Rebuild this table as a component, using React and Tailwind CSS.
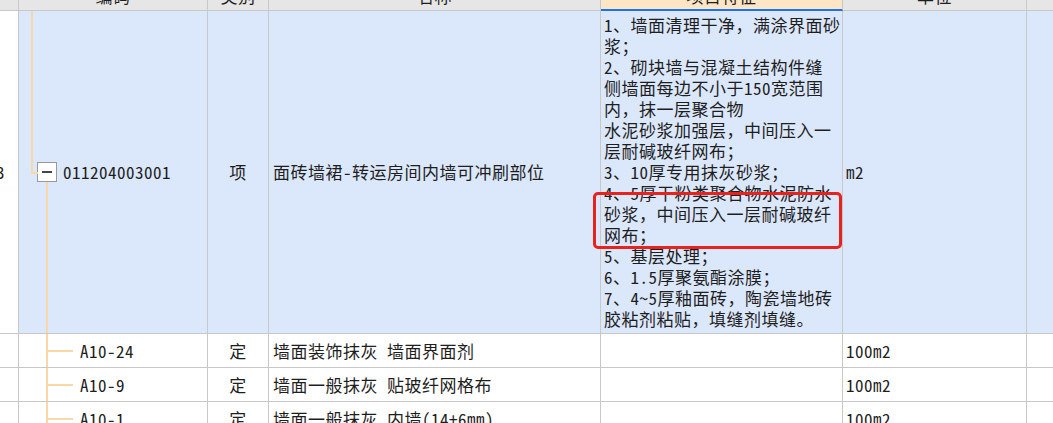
const features = [
  "1、墙面清理干净，满涂界面砂",
  "浆；",
  "2、砌块墙与混凝土结构件缝",
  "侧墙面每边不小于150宽范围",
  "内，抹一层聚合物",
  "水泥砂浆加强层，中间压入一",
  "层耐碱玻纤网布；",
  "3、10厚专用抹灰砂浆；",
  "4、5厚干粉类聚合物水泥防水",
  "砂浆，中间压入一层耐碱玻纤",
  "网布；",
  "5、基层处理；",
  "6、1.5厚聚氨酯涂膜；",
  "7、4~5厚釉面砖，陶瓷墙地砖",
  "胶粘剂粘贴，填缝剂填缝。",
];

const children = [
  { code: "A10-24", type: "定", name: "墙面装饰抹灰 墙面界面剂", unit: "100m2" },
  { code: "A10-9", type: "定", name: "墙面一般抹灰 贴玻纤网格布", unit: "100m2" },
  { code: "A10-1", type: "定", name: "墙面一般抹灰 内墙(14+6mm)", unit: "100m2" },
];

function HeadLabel({ children }) {
  return <span className="mt-[-15px] leading-[21px] whitespace-nowrap">{children}</span>;
}

export default function App() {
  return (
    <div
      className="w-[1053px] h-[423px] overflow-hidden bg-white text-[17px] tracking-[0.5px] text-[#1e1e1e]"
      style={{ fontFamily: '"Noto Sans Mono CJK SC", "Noto Sans CJK SC", sans-serif' }}
    >
      {/* header */}
      <div className="flex h-[11px] overflow-hidden bg-[#e6e6e6]">
        <div className="w-[19px] shrink-0 border-r border-b border-[#c8c8c8]" />
        <div className="w-[189px] shrink-0 flex justify-center border-r border-b border-[#c8c8c8]">
          <HeadLabel>编码</HeadLabel>
        </div>
        <div className="w-[61px] shrink-0 flex justify-center border-r border-b border-[#c8c8c8]">
          <HeadLabel>类别</HeadLabel>
        </div>
        <div className="w-[332px] shrink-0 flex justify-center border-r border-b border-[#c8c8c8]">
          <HeadLabel>名称</HeadLabel>
        </div>
        <div className="w-[242px] shrink-0 flex justify-center bg-[#fde5c6] border-r border-[#c8c8c8] border-b-2 border-b-[#1f72e4]">
          <HeadLabel>项目特征</HeadLabel>
        </div>
        <div className="w-[184px] shrink-0 flex justify-center border-r border-b border-[#c8c8c8]">
          <HeadLabel>单位</HeadLabel>
        </div>
        <div className="flex-1 border-b border-[#c8c8c8]" />
      </div>

      {/* selected list item row */}
      <div className="flex bg-[#dbe7fb] border-b border-[#c8c8c8]">
        <div className="w-[19px] shrink-0 flex items-center justify-end overflow-hidden bg-white pr-[13px] border-r border-[#c8c8c8]">
          <span className="whitespace-nowrap">13</span>
        </div>
        <div className="relative w-[189px] shrink-0 flex items-center pl-[18px] border-r border-[#c8c8c8]">
          <div className="absolute left-[12px] top-0 h-[calc(50%+1px)] w-[2px] bg-[#fad6ab]" />
          <div className="absolute left-[12px] top-[50%] w-[7px] h-[2px] bg-[#fad6ab]" />
          <div className="absolute left-[27px] top-[calc(50%+10px)] bottom-0 w-[2px] bg-[#fad6ab]" />
          <div className="w-[20px] h-[20px] shrink-0 flex items-center justify-center bg-white border border-[#9a9a9a]">
            <div className="w-[10px] h-[2px] bg-[#444]" />
          </div>
          <span className="ml-[6px]">011204003001</span>
        </div>
        <div className="w-[61px] shrink-0 flex items-center justify-center border-r border-[#c8c8c8]">项</div>
        <div className="w-[332px] shrink-0 flex items-center pl-[4px] border-r border-[#c8c8c8] whitespace-nowrap">
          面砖墙裙-转运房间内墙可冲刷部位
        </div>
        <div className="relative w-[242px] shrink-0 pl-[3px] pt-[3px] pb-[4px] leading-[21px] border-r border-[#c8c8c8]">
          {features.map((line, i) => (
            <div key={i} className="whitespace-nowrap">{line}</div>
          ))}
          <div className="absolute left-[-8px] top-[181px] w-[249px] h-[57px] rounded-[5px] border-[3px] border-[#e8231d]" />
        </div>
        <div className="w-[184px] shrink-0 flex items-center pl-[3px] border-r border-[#c8c8c8]">m2</div>
        <div className="flex-1" />
      </div>

      {/* quota rows */}
      {children.map((row) => (
        <div key={row.code} className="flex h-[34px] bg-white border-b border-[#c8c8c8]">
          <div className="w-[19px] shrink-0 border-r border-[#c8c8c8]" />
          <div className="relative w-[189px] shrink-0 flex items-center pl-[29px] border-r border-[#c8c8c8]">
            <div className="absolute left-[27px] top-0 bottom-0 w-[2px] bg-[#fad6ab]" />
            <div className="w-[25px] h-[2px] bg-[#fad6ab]" />
            <span className="ml-[7px]">{row.code}</span>
          </div>
          <div className="w-[61px] shrink-0 flex items-center justify-center border-r border-[#c8c8c8]">{row.type}</div>
          <div className="w-[332px] shrink-0 flex items-center pl-[4px] border-r border-[#c8c8c8] whitespace-nowrap">
            {row.name}
          </div>
          <div className="w-[242px] shrink-0 border-r border-[#c8c8c8]" />
          <div className="w-[184px] shrink-0 flex items-center pl-[3px] border-r border-[#c8c8c8]">{row.unit}</div>
          <div className="flex-1" />
        </div>
      ))}
    </div>
  );
}
